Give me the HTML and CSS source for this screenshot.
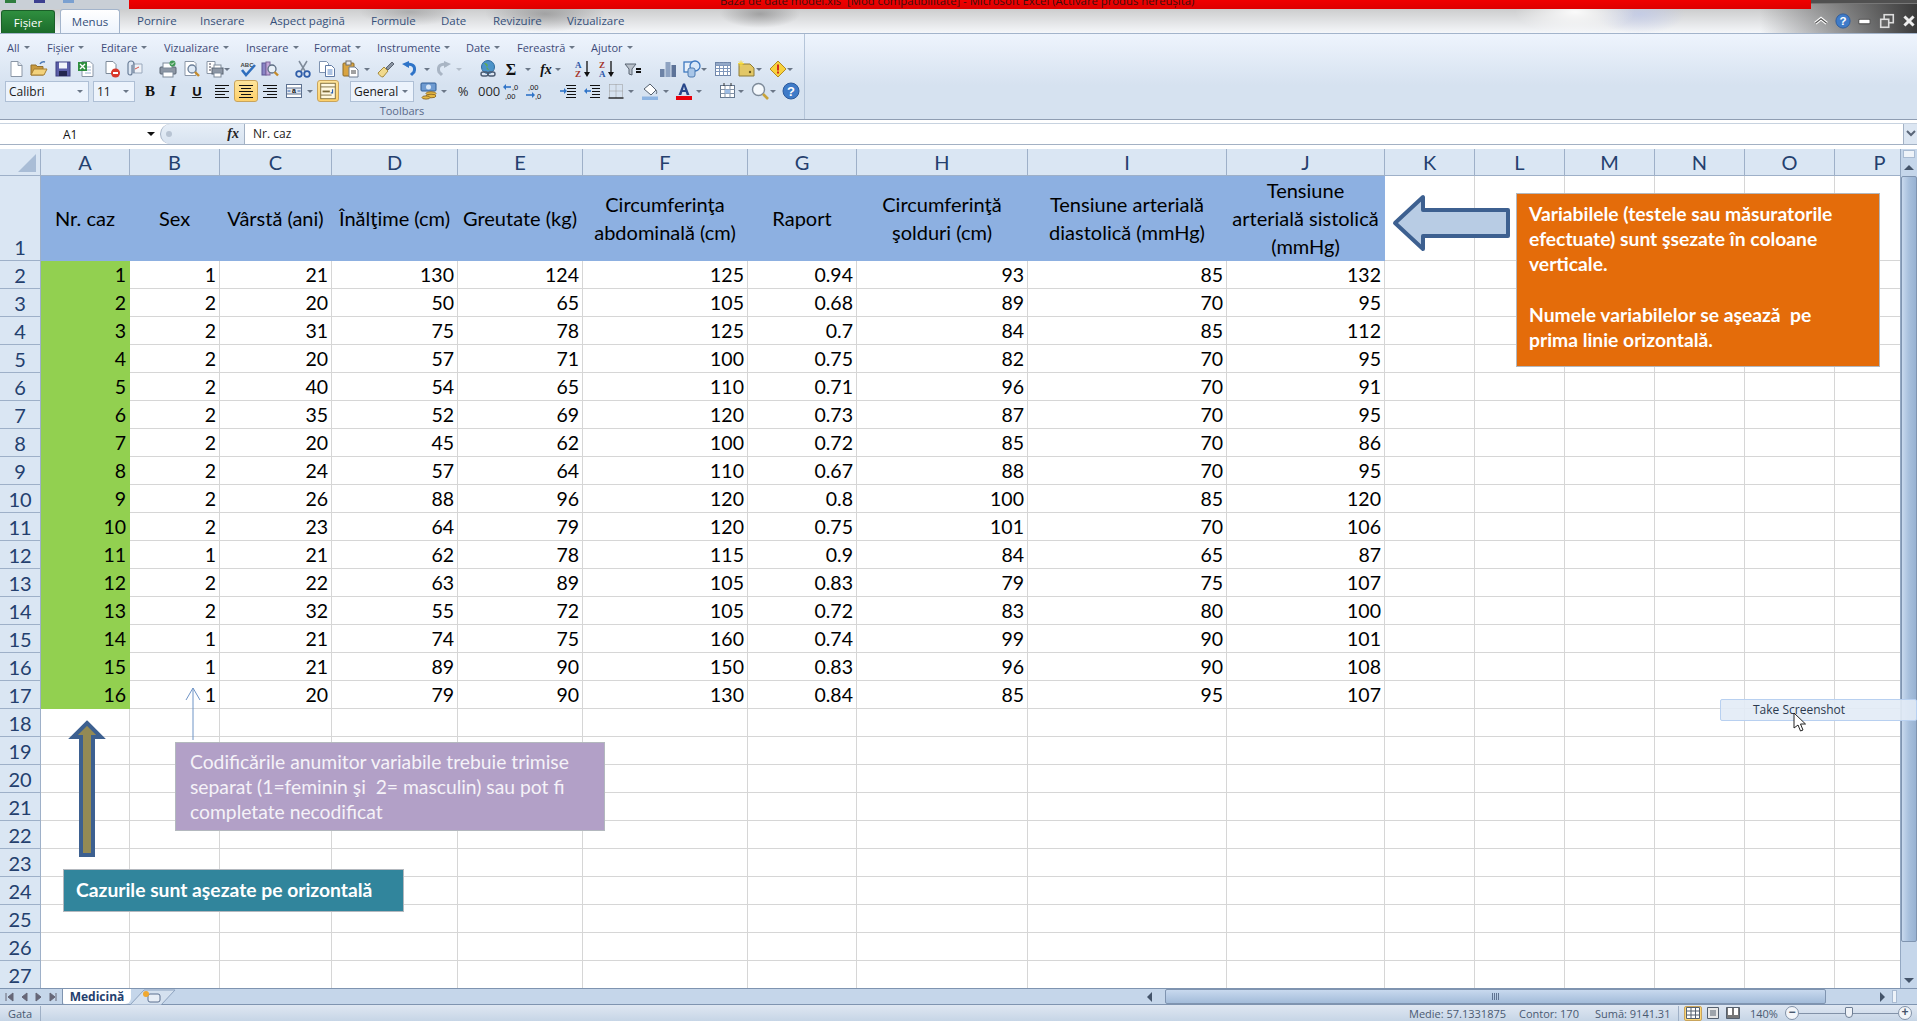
FILE: index.html
```html
<!DOCTYPE html>
<html lang="ro">
<head>
<meta charset="utf-8">
<title>Baza de date model.xls - Microsoft Excel</title>
<link rel="stylesheet" href="styles.css">
</head>
<body>

<svg class="defs" width="0" height="0">
	<symbol id="i-new" viewBox="0 0 18 18"><path d="M4 1.5h7l4 4v11H4z" fill="#fff" stroke="#8a96a6"/><path d="M11 1.5v4h4" fill="#dfe6ee" stroke="#8a96a6"/></symbol>
	<symbol id="i-open" viewBox="0 0 18 18"><path d="M1 15V5h5l1 1.500h6V15z" fill="#c99a3f" stroke="#94702c"/><path d="M1 15l3-6h13l-3 6z" fill="#f3d27c" stroke="#a57e32"/><path d="M10 4c1-2 3-2.500 5-2" fill="none" stroke="#4a78b5" stroke-width="1.500"/></symbol>
	<symbol id="i-save" viewBox="0 0 18 18"><rect x="2" y="2" width="14" height="14" fill="#5b5ea8" stroke="#3c3f80"/><rect x="5" y="2.500" width="8" height="6" fill="#f2f4fa"/><rect x="5" y="11" width="8" height="5" fill="#23264f"/></symbol>
	<symbol id="i-xls" viewBox="0 0 18 18"><path d="M5 1.500h8l3 3v12H5z" fill="#fff" stroke="#8a96a6"/><path d="M8 7h6M8 10h6M8 13h6" stroke="#9db4cf"/><rect x="1" y="2" width="9" height="9" fill="#2f8f3f"/><path d="M3 4l5 5M8 4l-5 5" stroke="#fff" stroke-width="1.400"/></symbol>
	<symbol id="i-noprint" viewBox="0 0 18 18"><path d="M3 1.500h7l3 3v9H3z" fill="#fff" stroke="#7d8a99"/><circle cx="12.500" cy="13" r="4.500" fill="#d8372a"/><rect x="10" y="12" width="5" height="2" fill="#fff"/></symbol>
	<symbol id="i-attach" viewBox="0 0 18 18"><path d="M8 4h9v9H8z" fill="#eef2f8" stroke="#9aa9bd"/><path d="M10 9l4-2" stroke="#d8544a"/><path d="M7 5v8a2 2 0 0 1-4 0V4a3 3 0 0 1 6 0v9" fill="none" stroke="#6b7f99" stroke-width="1.200"/></symbol>
	<symbol id="i-print" viewBox="0 0 18 18"><rect x="1" y="7" width="16" height="7" rx="1" fill="#8d97a5" stroke="#5a6472"/><rect x="4" y="3" width="9" height="5" fill="#fff" stroke="#7d8a99"/><rect x="4" y="12" width="10" height="5" fill="#fff" stroke="#7d8a99"/><circle cx="13.500" cy="3.500" r="3" fill="#3f9a55"/><path d="M12 3.500l1 1 2-2" stroke="#fff" fill="none"/></symbol>
	<symbol id="i-preview" viewBox="0 0 18 18"><path d="M2 1.500h9l2 2v12H2z" fill="#fff" stroke="#8a96a6"/><circle cx="9" cy="9" r="4" fill="#dfeaf6" stroke="#6b7f99" stroke-width="1.300"/><path d="M12 12l4 4" stroke="#c58b2a" stroke-width="2.400"/></symbol>
	<symbol id="i-setup" viewBox="0 0 18 18"><path d="M1 1.500h8v12H1z" fill="#fff" stroke="#8a96a6"/><path d="M3 4h2M3 7h2M3 10h2" stroke="#445"/><rect x="6" y="8" width="11" height="6" fill="#8d97a5" stroke="#5a6472"/><rect x="8" y="5" width="7" height="3" fill="#fff" stroke="#7d8a99"/><rect x="8" y="13" width="7" height="4" fill="#fff" stroke="#7d8a99"/></symbol>
	<symbol id="i-spell" viewBox="0 0 18 18"><text x="1.500" y="6.500" class="t-abc">ABC</text><path d="M3 10l4 5 9-10" fill="none" stroke="#2f6fbe" stroke-width="2.600"/></symbol>
	<symbol id="i-research" viewBox="0 0 18 18"><rect x="1" y="3" width="4" height="12" fill="#8a84c4" stroke="#5a5594"/><rect x="5" y="2" width="4" height="13" fill="#c2a8d8" stroke="#7c649c"/><circle cx="11" cy="9" r="4" fill="#e8f0f8" stroke="#5d6e84" stroke-width="1.300"/><path d="M13.500 12l3.500 3.500" stroke="#c58b2a" stroke-width="2.400"/></symbol>
	<symbol id="i-cut" viewBox="0 0 18 18"><path d="M5 1l6 10M13 1L7 11" stroke="#7f8b9a" stroke-width="1.500"/><circle cx="5" cy="14" r="2.800" fill="none" stroke="#2f5da8" stroke-width="1.800"/><circle cx="13" cy="14" r="2.800" fill="none" stroke="#2f5da8" stroke-width="1.800"/></symbol>
	<symbol id="i-copy" viewBox="0 0 18 18"><path d="M1.500 1.500h7l2 2v9h-9z" fill="#fff" stroke="#7f93b0"/><path d="M7.500 5.500h6l3 3v8h-9z" fill="#fff" stroke="#5f79a3"/><path d="M9.500 10h5M9.500 12h5M9.500 14h5" stroke="#5b87c7"/></symbol>
	<symbol id="i-paste" viewBox="0 0 18 18"><rect x="2" y="3" width="11" height="13" rx="1" fill="#d9a441" stroke="#8d6a26"/><rect x="5" y="1" width="5" height="4" fill="#e8e8e8" stroke="#6f6f6f"/><path d="M8 7h6l3 3v7H8z" fill="#fff" stroke="#6f7d90"/><path d="M10 11h5M10 13h5" stroke="#444"/></symbol>
	<symbol id="i-brush" viewBox="0 0 18 18"><path d="M1 13l6-6 4 4-5 6c-2 0-4-2-5-4z" fill="#f0d98c" stroke="#a58a3c"/><path d="M9 8l6-6 2 2-6 6z" fill="#8a94a2" stroke="#5c6674"/></symbol>
	<symbol id="i-undo" viewBox="0 0 18 18"><path d="M5 5c6-2 10 1 8 7l-3 3" fill="none" stroke="#2f74c8" stroke-width="3"/><path d="M1 4l7-3v7z" fill="#2f74c8"/></symbol>
	<symbol id="i-redo" viewBox="0 0 18 18"><path d="M13 5C7 3 3 6 5 12l3 3" fill="none" stroke="#a9b5c4" stroke-width="3"/><path d="M17 4l-7-3v7z" fill="#a9b5c4"/></symbol>
	<symbol id="i-link" viewBox="0 0 18 18"><circle cx="9" cy="7" r="6.500" fill="#4b93c9" stroke="#2f6a9c"/><path d="M5 3c3 0 5 2 3 4s2 3 3 4" fill="#5fa955"/><rect x="2" y="12" width="7" height="4" rx="2" fill="none" stroke="#4a5a70" stroke-width="1.400"/><rect x="9" y="12" width="7" height="4" rx="2" fill="none" stroke="#4a5a70" stroke-width="1.400"/></symbol>
	<symbol id="i-sigma" viewBox="0 0 18 18"><text x="9" y="15" text-anchor="middle" class="t-sig">Σ</text></symbol>
	<symbol id="i-fx" viewBox="0 0 18 18"><text x="9" y="14" text-anchor="middle" class="t-fx">fx</text></symbol>
	<symbol id="i-az" viewBox="0 0 18 18"><text x="1" y="8" class="t-sort t-blue">A</text><text x="1" y="17" class="t-sort t-red">Z</text><path d="M13 1v14" stroke="#111" stroke-width="1.300"/><path d="M10 12l3 5 3-5z" fill="#111"/></symbol>
	<symbol id="i-za" viewBox="0 0 18 18"><text x="1" y="8" class="t-sort t-red">Z</text><text x="1" y="17" class="t-sort t-blue">A</text><path d="M13 1v14" stroke="#111" stroke-width="1.300"/><path d="M10 12l3 5 3-5z" fill="#111"/></symbol>
	<symbol id="i-filter" viewBox="0 0 18 18"><path d="M1 4h11L8 9v6l-3-1V9z" fill="#b9c1cb" stroke="#596472"/><path d="M12 9h5M12 12h5" stroke="#111" stroke-width="1.800"/></symbol>
	<symbol id="i-chart" viewBox="0 0 18 18"><rect x="1" y="9" width="4.500" height="8" fill="#6d83a6"/><rect x="6.500" y="2" width="5" height="15" fill="#8ea3c2"/><rect x="12.500" y="5" width="4.500" height="12" fill="#5d7398"/></symbol>
	<symbol id="i-shapes" viewBox="0 0 18 18"><rect x="1" y="2" width="10" height="10" fill="#e8f0fa" stroke="#3d78c0" stroke-width="1.300"/><circle cx="12" cy="6" r="5" fill="#d9e8f8" stroke="#3d78c0" stroke-width="1.300"/><rect x="5" y="8" width="7" height="9" rx="2" fill="#a8c6e8" stroke="#4d7ab0"/></symbol>
	<symbol id="i-table" viewBox="0 0 18 18"><rect x="1.500" y="2.500" width="15" height="13" fill="#fff" stroke="#6f85a8"/><path d="M1.500 5.500h15M1.500 8.500h15M1.500 11.500h15M5.500 2.500v13M9.500 2.500v13M13.500 2.500v13" stroke="#7f97bb"/><rect x="2" y="3" width="14" height="2" fill="#94a9c8"/></symbol>
	<symbol id="i-note" viewBox="0 0 18 18"><path d="M2 4h11l4 4v8H2z" fill="#e2c766" stroke="#8c7a38"/><circle cx="13" cy="12" r="1.200" fill="#6a5a20"/><path d="M4 0.500v6M1 3.500h6M2 1.500l4 4M6 1.500l-4 4" stroke="#f5d93a"/></symbol>
	<symbol id="i-warn" viewBox="0 0 18 18"><path d="M9 1l8 8-8 8-8-8z" fill="#f7d23e" stroke="#b48a20"/><rect x="8" y="4.500" width="2" height="6" fill="#d32a1c"/><rect x="8" y="11.500" width="2" height="2" fill="#d32a1c"/></symbol>
	<symbol id="i-left" viewBox="0 0 18 18"><path d="M2 3.500h14M2 6.500h10M2 9.500h14M2 12.500h10M2 15.500h14" stroke="#111"/></symbol>
	<symbol id="i-center" viewBox="0 0 18 18"><path d="M2 3.500h14M4 6.500h10M2 9.500h14M4 12.500h10M2 15.500h14" stroke="#111"/></symbol>
	<symbol id="i-right" viewBox="0 0 18 18"><path d="M2 3.500h14M6 6.500h10M2 9.500h14M6 12.500h10M2 15.500h14" stroke="#111"/></symbol>
	<symbol id="i-merge" viewBox="0 0 18 18"><rect x="1.500" y="2.500" width="15" height="13" fill="#fff" stroke="#5d7190"/><rect x="1.500" y="6" width="15" height="6" fill="#e4e9f0" stroke="#5d7190"/><text x="9" y="11.300" text-anchor="middle" class="t-merge">a</text><path d="M2.500 9h3M15.500 9h-3" stroke="#2a5fb0"/></symbol>
	<symbol id="i-wrap" viewBox="0 0 22 22"><rect x="3" y="2.500" width="16" height="17" fill="#fff8e0" stroke="#7c6a3a"/><path d="M3 6.500h16M3 15.500h12" stroke="#7c6a3a"/><path d="M5 11.500h8" stroke="#7c6a3a" stroke-width="2"/><path d="M16 9v4h-2" fill="none" stroke="#2a5fb0" stroke-width="1.300"/></symbol>
	<symbol id="i-money" viewBox="0 0 18 18"><rect x="1" y="1" width="15" height="8" rx="1" fill="#6f9bd1" stroke="#2f5d96"/><circle cx="8.500" cy="5" r="2.500" fill="#d7e6f7"/><ellipse cx="11" cy="11.500" rx="5" ry="1.800" fill="#e6b83f" stroke="#94702c"/><ellipse cx="11" cy="14" rx="5" ry="1.800" fill="#e6b83f" stroke="#94702c"/><ellipse cx="6" cy="15.500" rx="4" ry="1.600" fill="#e6b83f" stroke="#94702c"/></symbol>
	<symbol id="i-incdec" viewBox="0 0 18 18"><path d="M9 5H3" stroke="#2f74c8" stroke-width="1.600"/><path d="M1 5l3-3v6z" fill="#2f74c8"/><text x="10" y="8" class="t-dec">,0</text><text x="3" y="17" class="t-dec">,00</text></symbol>
	<symbol id="i-decdec" viewBox="0 0 18 18"><text x="3" y="8" class="t-dec">,00</text><path d="M1 13h6" stroke="#2f74c8" stroke-width="1.600"/><path d="M10 13l-3-3v6z" fill="#2f74c8"/><text x="10" y="17" class="t-dec">,0</text></symbol>
	<symbol id="i-indent" viewBox="0 0 18 18"><path d="M7 3.500h10M8 6.500h9M8 9.500h9M8 12.500h9M7 15.500h10" stroke="#111"/><path d="M1 9h4" stroke="#2f74c8" stroke-width="1.600"/><path d="M8 9L5 6v6z" fill="#2f74c8"/></symbol>
	<symbol id="i-outdent" viewBox="0 0 18 18"><path d="M7 3.500h10M9 6.500h8M9 9.500h8M9 12.500h8M7 15.500h10" stroke="#111"/><path d="M4 9h4" stroke="#2f74c8" stroke-width="1.600"/><path d="M1 9l3-3v6z" fill="#2f74c8"/></symbol>
	<symbol id="i-border" viewBox="0 0 18 18"><path d="M2.500 2.500h13v13M2.500 2.500v13M9 2.500v13M2.500 9h13" fill="none" stroke="#999" stroke-dasharray="1 1"/><path d="M1.500 16h15" stroke="#111" stroke-width="1.300"/></symbol>
	<symbol id="i-fill" viewBox="0 0 18 18"><path d="M3 7l6-5 6 6-5 5z" fill="#fff" stroke="#55606e"/><path d="M15 8c1 2 1 3 0 4" fill="none" stroke="#55606e"/><rect x="1" y="14.500" width="16" height="3.500" fill="#8db4e2"/></symbol>
	<symbol id="i-color" viewBox="0 0 18 18"><path d="M3.500 13L8 1.500h2L14.500 13h-2.800l-1-3H7.300l-1 3zM8 8h2L9 4.500z" fill="#28478a"/><rect x="1" y="14" width="16" height="4" fill="#e8000b"/></symbol>
	<symbol id="i-grid" viewBox="0 0 18 18"><rect x="1.500" y="3.500" width="14" height="12" fill="#fff" stroke="#66788f"/><path d="M6 3.500v12M11 3.500v12M1.500 7.500h14M1.500 11.500h14" stroke="#8393a8"/><rect x="6" y="7.500" width="5" height="4" fill="#9dbde6"/><path d="M5 1v3M12 1v3" stroke="#333"/></symbol>
	<symbol id="i-find" viewBox="0 0 18 18"><circle cx="7.500" cy="7.500" r="6" fill="#f4f8fc" stroke="#7d8a99" stroke-width="1.400"/><path d="M12 12l5 5" stroke="#c8a33a" stroke-width="2.600"/></symbol>
	<symbol id="i-help" viewBox="0 0 18 18"><circle cx="9" cy="9" r="8" fill="#3f7bc8" stroke="#2b5a9c"/><text x="9" y="13.500" text-anchor="middle" class="t-help">?</text></symbol>
</svg>

<header class="chrome">
	<div class="titlebar">
		<div class="qat"><span class="qat-xl"></span><span class="qat-save"></span><span class="qat-undo"></span></div>
		<div class="redband"><span class="doc-title">Baza de date model.xls&nbsp; [Mod compatibilitate] - Microsoft Excel (Activare produs nereuşită)</span></div>
		<div class="winframe"></div>
	</div>
	<nav class="tabs">
		<div class="tab-file">Fişier</div>
		<div class="tab-on">Menus</div>
		<div>Pornire</div>
		<div>Inserare</div>
		<div>Aspect pagină</div>
		<div>Formule</div>
		<div>Date</div>
		<div>Revizuire</div>
		<div>Vizualizare</div>
		<div class="winbtns">
			<svg class="wb" viewBox="0 0 14 14"><path d="M2 9l5-4 5 4" fill="none" stroke="#fff" stroke-width="3"/><path d="M2 9l5-4 5 4" fill="none" stroke="#555" stroke-width="1"/></svg>
			<svg class="wb wb-help"><use href="#i-help"/></svg>
			<svg class="wb" viewBox="0 0 14 14"><rect x="1.500" y="5.500" width="10" height="4" rx="1" fill="#fff" stroke="#555"/></svg>
			<svg class="wb" viewBox="0 0 14 14"><rect x="4.500" y="1.500" width="8" height="7" fill="none" stroke="#ddd" stroke-width="1.400"/><rect x="1.500" y="5.500" width="7" height="7" fill="#666" stroke="#ddd" stroke-width="1.400"/></svg>
			<svg class="wb" viewBox="0 0 14 14"><path d="M3 3l8 8M11 3l-8 8" stroke="#eee" stroke-width="2.600"/></svg>
		</div>
	</nav>
</header>

<section class="ribbon">
	<div class="rgroup">
		<div class="menubar">
			<span>All<i class="dd"></i></span>
			<span>Fişier<i class="dd"></i></span>
			<span>Editare<i class="dd"></i></span>
			<span>Vizualizare<i class="dd"></i></span>
			<span>Inserare<i class="dd"></i></span>
			<span>Format<i class="dd"></i></span>
			<span>Instrumente<i class="dd"></i></span>
			<span>Date<i class="dd"></i></span>
			<span>Fereastră<i class="dd"></i></span>
			<span>Ajutor<i class="dd"></i></span>
		</div>
		<div class="toolbar tb1">
			<svg class="ico m7"><use href="#i-new"/></svg>
			<svg class="ico m5"><use href="#i-open"/></svg>
			<svg class="ico m6"><use href="#i-save"/></svg>
			<svg class="ico m5"><use href="#i-xls"/></svg>
			<svg class="ico m8"><use href="#i-noprint"/></svg>
			<svg class="ico m4"><use href="#i-attach"/></svg>
			<svg class="ico m16"><use href="#i-print"/></svg>
			<svg class="ico m6"><use href="#i-preview"/></svg>
			<svg class="ico m5"><use href="#i-setup"/></svg>
			<i class="dd"></i>
			<svg class="ico m9"><use href="#i-spell"/></svg>
			<svg class="ico m4"><use href="#i-research"/></svg>
			<svg class="ico m15"><use href="#i-cut"/></svg>
			<svg class="ico m6"><use href="#i-copy"/></svg>
			<svg class="ico m5"><use href="#i-paste"/></svg>
			<i class="dd m5"></i>
			<svg class="ico m7"><use href="#i-brush"/></svg>
			<svg class="ico m6"><use href="#i-undo"/></svg>
			<i class="dd m5"></i>
			<svg class="ico m4"><use href="#i-redo"/></svg>
			<i class="dd dd-off m4"></i>
			<svg class="ico m17"><use href="#i-link"/></svg>
			<svg class="ico m5"><use href="#i-sigma"/></svg>
			<i class="dd m5"></i>
			<svg class="ico m6"><use href="#i-fx"/></svg>
			<i class="dd"></i>
			<svg class="ico m13"><use href="#i-az"/></svg>
			<svg class="ico m6"><use href="#i-za"/></svg>
			<svg class="ico m8"><use href="#i-filter"/></svg>
			<svg class="ico m17"><use href="#i-chart"/></svg>
			<svg class="ico m6"><use href="#i-shapes"/></svg>
			<i class="dd"></i>
			<svg class="ico m7"><use href="#i-table"/></svg>
			<svg class="ico m5"><use href="#i-note"/></svg>
			<i class="dd m1"></i>
			<svg class="ico m7"><use href="#i-warn"/></svg>
			<i class="dd"></i>
		</div>
		<div class="toolbar tb2">
			<div class="sel sel-font m5">Calibri<i class="dd"></i></div>
			<div class="sel sel-size m4">11<i class="dd"></i></div>
			<span class="fmt fmt-b m6">B</span>
			<span class="fmt fmt-i m5">I</span>
			<span class="fmt fmt-u m6">U</span>
			<svg class="ico m7"><use href="#i-left"/></svg>
			<div class="hot hot-center m3"><svg class="ico"><use href="#i-center"/></svg></div>
			<svg class="ico m3"><use href="#i-right"/></svg>
			<svg class="ico m6"><use href="#i-merge"/></svg>
			<i class="dd m4"></i>
			<div class="hot hot-wrap m4"><svg class="ico-wide"><use href="#i-wrap"/></svg></div>
			<div class="sel sel-num m11">General<i class="dd"></i></div>
			<svg class="ico m6"><use href="#i-money"/></svg>
			<i class="dd m3"></i>
			<span class="fmt fmt-pct m7">%</span>
			<span class="fmt fmt-pct m6">000</span>
			<svg class="ico m6"><use href="#i-incdec"/></svg>
			<svg class="ico m5"><use href="#i-decdec"/></svg>
			<svg class="ico m16"><use href="#i-indent"/></svg>
			<svg class="ico m6"><use href="#i-outdent"/></svg>
			<svg class="ico m6"><use href="#i-border"/></svg>
			<i class="dd m3"></i>
			<svg class="ico m7"><use href="#i-fill"/></svg>
			<i class="dd m4"></i>
			<svg class="ico m6"><use href="#i-color"/></svg>
			<i class="dd m3"></i>
			<svg class="ico m17"><use href="#i-grid"/></svg>
			<i class="dd m1"></i>
			<svg class="ico m7"><use href="#i-find"/></svg>
			<i class="dd m1"></i>
			<svg class="ico m6"><use href="#i-help"/></svg>
		</div>
		<div class="rlabel">Toolbars</div>
	</div>
</section>

<section class="formulabar">
	<div class="namebox">A1<i class="dd dd-dark"></i></div>
	<div class="fxbox"><span class="fxdot"></span><span class="fxglyph">fx</span></div>
	<div class="fxinput">Nr. caz</div>
	<div class="fxexpand"><svg width="10" height="8" viewBox="0 0 10 8"><path d="M1 1l4 4 4-4" fill="none" stroke="#5a6678" stroke-width="2"/></svg></div>
</section>

<main class="workarea">
	<div class="sheet">
		<table class="cells">
			<colgroup>
				<col class="w41"><col class="w89"><col class="w90"><col class="w112"><col class="w126"><col class="w125"><col class="w165"><col class="w109"><col class="w171"><col class="w199"><col class="w158">
				<col class="w90"><col class="w90"><col class="w90"><col class="w90"><col class="w90"><col class="w90">
			</colgroup>
			<thead>
				<tr><th class="corner"><span class="corner-mark"></span></th><th>A</th><th>B</th><th>C</th><th>D</th><th>E</th><th>F</th><th>G</th><th>H</th><th>I</th><th>J</th><th>K</th><th>L</th><th>M</th><th>N</th><th>O</th><th>P</th></tr>
			</thead>
			<tbody>
				<tr class="head"><th class="rownum-bottom">1</th><td>Nr. caz</td><td>Sex</td><td>Vârstă (ani)</td><td>Înălţime (cm)</td><td>Greutate (kg)</td><td>Circumferinţa<br>abdominală (cm)</td><td>Raport</td><td>Circumferinţă<br>şolduri (cm)</td><td>Tensiune arterială<br>diastolică (mmHg)</td><td>Tensiune<br>arterială sistolică<br>(mmHg)</td><td class="e"></td><td class="e"></td><td class="e"></td><td class="e"></td><td class="e"></td><td class="e"></td></tr>
				<tr><th>2</th><td class="id">1</td><td>1</td><td>21</td><td>130</td><td>124</td><td>125</td><td>0.94</td><td>93</td><td>85</td><td>132</td><td></td><td></td><td></td><td></td><td></td><td></td></tr>
				<tr><th>3</th><td class="id">2</td><td>2</td><td>20</td><td>50</td><td>65</td><td>105</td><td>0.68</td><td>89</td><td>70</td><td>95</td><td></td><td></td><td></td><td></td><td></td><td></td></tr>
				<tr><th>4</th><td class="id">3</td><td>2</td><td>31</td><td>75</td><td>78</td><td>125</td><td>0.7</td><td>84</td><td>85</td><td>112</td><td></td><td></td><td></td><td></td><td></td><td></td></tr>
				<tr><th>5</th><td class="id">4</td><td>2</td><td>20</td><td>57</td><td>71</td><td>100</td><td>0.75</td><td>82</td><td>70</td><td>95</td><td></td><td></td><td></td><td></td><td></td><td></td></tr>
				<tr><th>6</th><td class="id">5</td><td>2</td><td>40</td><td>54</td><td>65</td><td>110</td><td>0.71</td><td>96</td><td>70</td><td>91</td><td></td><td></td><td></td><td></td><td></td><td></td></tr>
				<tr><th>7</th><td class="id">6</td><td>2</td><td>35</td><td>52</td><td>69</td><td>120</td><td>0.73</td><td>87</td><td>70</td><td>95</td><td></td><td></td><td></td><td></td><td></td><td></td></tr>
				<tr><th>8</th><td class="id">7</td><td>2</td><td>20</td><td>45</td><td>62</td><td>100</td><td>0.72</td><td>85</td><td>70</td><td>86</td><td></td><td></td><td></td><td></td><td></td><td></td></tr>
				<tr><th>9</th><td class="id">8</td><td>2</td><td>24</td><td>57</td><td>64</td><td>110</td><td>0.67</td><td>88</td><td>70</td><td>95</td><td></td><td></td><td></td><td></td><td></td><td></td></tr>
				<tr><th>10</th><td class="id">9</td><td>2</td><td>26</td><td>88</td><td>96</td><td>120</td><td>0.8</td><td>100</td><td>85</td><td>120</td><td></td><td></td><td></td><td></td><td></td><td></td></tr>
				<tr><th>11</th><td class="id">10</td><td>2</td><td>23</td><td>64</td><td>79</td><td>120</td><td>0.75</td><td>101</td><td>70</td><td>106</td><td></td><td></td><td></td><td></td><td></td><td></td></tr>
				<tr><th>12</th><td class="id">11</td><td>1</td><td>21</td><td>62</td><td>78</td><td>115</td><td>0.9</td><td>84</td><td>65</td><td>87</td><td></td><td></td><td></td><td></td><td></td><td></td></tr>
				<tr><th>13</th><td class="id">12</td><td>2</td><td>22</td><td>63</td><td>89</td><td>105</td><td>0.83</td><td>79</td><td>75</td><td>107</td><td></td><td></td><td></td><td></td><td></td><td></td></tr>
				<tr><th>14</th><td class="id">13</td><td>2</td><td>32</td><td>55</td><td>72</td><td>105</td><td>0.72</td><td>83</td><td>80</td><td>100</td><td></td><td></td><td></td><td></td><td></td><td></td></tr>
				<tr><th>15</th><td class="id">14</td><td>1</td><td>21</td><td>74</td><td>75</td><td>160</td><td>0.74</td><td>99</td><td>90</td><td>101</td><td></td><td></td><td></td><td></td><td></td><td></td></tr>
				<tr><th>16</th><td class="id">15</td><td>1</td><td>21</td><td>89</td><td>90</td><td>150</td><td>0.83</td><td>96</td><td>90</td><td>108</td><td></td><td></td><td></td><td></td><td></td><td></td></tr>
				<tr><th>17</th><td class="id">16</td><td>1</td><td>20</td><td>79</td><td>90</td><td>130</td><td>0.84</td><td>85</td><td>95</td><td>107</td><td></td><td></td><td></td><td></td><td></td><td></td></tr>
				<tr><th>18</th><td></td><td></td><td></td><td></td><td></td><td></td><td></td><td></td><td></td><td></td><td></td><td></td><td></td><td></td><td></td><td></td></tr>
				<tr><th>19</th><td></td><td></td><td></td><td></td><td></td><td></td><td></td><td></td><td></td><td></td><td></td><td></td><td></td><td></td><td></td><td></td></tr>
				<tr><th>20</th><td></td><td></td><td></td><td></td><td></td><td></td><td></td><td></td><td></td><td></td><td></td><td></td><td></td><td></td><td></td><td></td></tr>
				<tr><th>21</th><td></td><td></td><td></td><td></td><td></td><td></td><td></td><td></td><td></td><td></td><td></td><td></td><td></td><td></td><td></td><td></td></tr>
				<tr><th>22</th><td></td><td></td><td></td><td></td><td></td><td></td><td></td><td></td><td></td><td></td><td></td><td></td><td></td><td></td><td></td><td></td></tr>
				<tr><th>23</th><td></td><td></td><td></td><td></td><td></td><td></td><td></td><td></td><td></td><td></td><td></td><td></td><td></td><td></td><td></td><td></td></tr>
				<tr><th>24</th><td></td><td></td><td></td><td></td><td></td><td></td><td></td><td></td><td></td><td></td><td></td><td></td><td></td><td></td><td></td><td></td></tr>
				<tr><th>25</th><td></td><td></td><td></td><td></td><td></td><td></td><td></td><td></td><td></td><td></td><td></td><td></td><td></td><td></td><td></td><td></td></tr>
				<tr><th>26</th><td></td><td></td><td></td><td></td><td></td><td></td><td></td><td></td><td></td><td></td><td></td><td></td><td></td><td></td><td></td><td></td></tr>
				<tr><th>27</th><td></td><td></td><td></td><td></td><td></td><td></td><td></td><td></td><td></td><td></td><td></td><td></td><td></td><td></td><td></td><td></td></tr>
			</tbody>
		</table>

		<!-- shapes drawn over the sheet -->
		<div class="note note-orange"><b>Variabilele (testele sau măsuratorile<br>efectuate) sunt şsezate în coloane<br>verticale.<br><br>Numele variabilelor se aşează&nbsp; pe<br>prima linie orizontală.</b></div>
		<div class="note note-purple">Codificările anumitor variabile trebuie trimise<br>separat (1=feminin şi&nbsp; 2= masculin) sau pot fi<br>completate necodificat</div>
		<div class="note note-teal"><b>Cazurile sunt aşezate pe orizontală</b></div>
		<svg class="arrow arrow-left" width="124" height="60" viewBox="0 0 124 60"><path d="M5 30L33 4v13h85v26H33v13z" fill="#b8cce4" stroke="#3d6090" stroke-width="4" stroke-linejoin="round"/></svg>
		<svg class="arrow arrow-up" width="38" height="142" viewBox="0 0 38 142"><path d="M19 5L33 19h-8v118H13V19H5z" fill="#948a54" stroke="#3d6090" stroke-width="4"/></svg>
		<svg class="arrow arrow-thin" width="18" height="56" viewBox="0 0 18 56"><path d="M9 54V2M2 14L9 2l7 12" fill="none" stroke="#6f94c6"/></svg>
	</div>
	<aside class="vscroll">
		<div class="vsplit"></div>
		<div class="varrow"><i class="tri-up"></i></div>
		<div class="vthumb"></div>
		<div class="varrow varrow-end"><i class="tri-down"></i></div>
	</aside>
</main>

<section class="tabbar">
	<div class="sheetnav">
		<svg width="62" height="16" viewBox="0 0 62 16"><path d="M6 4v8M13 4L8 8l5 4zM27 4l-5 4 5 4zM36 4l5 4-5 4zM50 4l5 4-5 4zM56 4v8" fill="#667" stroke="#667"/></svg>
	</div>
	<div class="sheettab">Medicină</div>
	<svg class="newtab" width="46" height="16" viewBox="0 0 46 16"><path d="M0 16L14 1h31L31 16z" fill="#d5e1ef" stroke="#8ea3bf"/><rect x="18" y="5" width="12" height="8" rx="2" fill="#e8eef6" stroke="#5d7190"/><circle cx="16" cy="5" r="3" fill="#f0a830"/></svg>
	<div class="hscroll">
		<i class="tri-left"></i>
		<div class="hthumb"><span class="grip"></span></div>
		<i class="tri-right"></i>
		<span class="hsplit"></span>
	</div>
</section>

<footer class="statusbar">
	<span class="ready">Gata</span>
	<span class="stat stat-avg">Medie: 57.1331875</span>
	<span class="stat stat-cnt">Contor: 170</span>
	<span class="stat stat-sum">Sumă: 9141.31</span>
	<div class="viewbtns">
		<span class="view view-on"><svg width="14" height="12" viewBox="0 0 14 12"><path d="M.5.5h13v11H.5zM.5 4h13M.5 8h13M5 .5v11M9.500 .5v11" fill="#fff" stroke="#55606e"/></svg></span>
		<span class="view"><svg width="14" height="12" viewBox="0 0 14 12"><path d="M1.500.5h11v11h-11z" fill="#e8e8e8" stroke="#55606e"/><path d="M4 4h6M4 6h6M4 8h6" stroke="#55606e"/></svg></span>
		<span class="view"><svg width="14" height="12" viewBox="0 0 14 12"><path d="M.5.5h13v11H.5z" fill="#777" stroke="#55606e"/><rect x="2" y="1" width="4" height="7" fill="#fff"/><rect x="8" y="1" width="4" height="7" fill="#fff"/></svg></span>
	</div>
	<span class="zoomtxt">140%</span>
	<div class="zoomer">
		<span class="zbtn">&minus;</span>
		<span class="ztrack"><i class="zthumb"></i></span>
		<span class="zbtn">+</span>
	</div>
</footer>

<div class="tip">Take Screenshot</div>
<svg class="pointer" width="14" height="20" viewBox="0 0 14 20"><path d="M1 1v15l4-3 2.500 6 2.500-1-2.500-6h5z" fill="#fff" stroke="#222"/></svg>

</body>
</html>
```

FILE: styles.css
```css
html, body{
	margin: 0;
	padding: 0;
}
body{
	width: 1917px;
	height: 1021px;
	overflow: hidden;
	position: relative;
	display: flex;
	flex-direction: column;
	font: 12px "Open Sans", sans-serif;
	color: #3b4a63;
	background: #fff;
}
.defs{
	display: none;
}
i{
	display: block;
}

/* window title and tabs */
.chrome{
	height: 33px;
	flex: none;
	background:
		radial-gradient(ellipse 60px 22px at 1575px 12px, rgba(255,255,255,.9), transparent),
		radial-gradient(ellipse 45px 20px at 1640px 14px, rgba(190,200,235,.7), transparent),
		radial-gradient(ellipse 60px 18px at 545px 14px, rgba(120,120,120,.55), transparent),
		radial-gradient(ellipse 50px 14px at 410px 12px, rgba(120,120,120,.4), transparent),
		radial-gradient(ellipse 40px 14px at 760px 14px, rgba(110,110,110,.5), transparent),
		linear-gradient(90deg, transparent 1760px, #3a3a3a 1917px),
		linear-gradient(#bdbdbd, #f5f7fa);
}
.titlebar{
	height: 9px;
	display: flex;
	overflow: hidden;
}
.qat{
	width: 129px;
	display: flex;
	gap: 18px;
	padding-left: 5px;
	box-sizing: border-box;
	background: #c9cfd6;
}
.qat span{
	display: block;
	width: 11px;
	height: 3px;
	background: #2f7d3e;
}
.qat .qat-save{
	background: #3c3f90;
}
.qat .qat-undo{
	background: #7aa0d0;
}
.redband{
	width: 1682px;
	background: linear-gradient(#f00000, #dd0000);
	position: relative;
}
.doc-title{
	display: block;
	margin-left: 591px;
	margin-top: -7px;
	font-size: 11.300px;
	line-height: 16px;
	color: #3a1010;
	white-space: nowrap;
}
.winframe{
	flex: 1;
	background: #505050;
	border-bottom: 1px solid #777;
	height: 3px;
}
.tabs{
	height: 24px;
	display: grid;
	grid-template-columns: 59px 77px 63px 70px 101px 70px 52px 74px 100px 1fr;
	padding-left: 1px;
	align-items: center;
	line-height: 24px;
	font-size: 11.5px;
	color: #35507a;
	box-sizing: border-box;
}
.tab-file{
	width: 54px;
	height: 23px;
	align-self: end;
	text-align: center;
	color: #fff;
	background: linear-gradient(#2f8f3f, #1b6b2a);
	border-radius: 3px 3px 0 0;
	border: 1px solid #1a5e28;
	border-bottom: 0;
	box-sizing: border-box;
}
.tab-on{
	width: 60px;
	height: 24px;
	text-align: center;
	color: #35507a;
	background: linear-gradient(#fff, #edf3fc);
	border: 1px solid #a3b4cb;
	border-bottom: 0;
	border-radius: 3px 3px 0 0;
	box-sizing: border-box;
}
.winbtns{
	display: flex;
	justify-content: flex-end;
	gap: 6px;
	padding-right: 0;
	align-items: center;
}
.wb{
	width: 16px;
	height: 16px;
}

/* ribbon */
.ribbon{
	height: 87px;
	flex: none;
	display: flex;
	box-sizing: border-box;
	background: linear-gradient(#eef4fd, #d6e2f0 60%);
	border-top: 1px solid #a3b4cb;
	border-bottom: 1px solid #8f9db2;
}
.rgroup{
	width: 805px;
	box-sizing: border-box;
	border-right: 1px solid #b5c5d9;
	padding-top: 4px;
}
.menubar{
	height: 18px;
	display: grid;
	grid-template-columns: 40px 54px 63px 82px 68px 63px 89px 51px 74px auto;
	padding-left: 7px;
	align-items: center;
	font-size: 11px;
	color: #3d4a78;
}
.menubar span{
	display: flex;
	align-items: center;
	gap: 4px;
}
.dd{
	flex: none;
	width: 0;
	height: 0;
	border-left: 3px solid transparent;
	border-right: 3px solid transparent;
	border-top: 3px solid #6b7787;
}
.dd-off{
	border-top-color: #b3bdca;
}
.dd-dark{
	border-top-color: #111;
	border-left-width: 4px;
	border-right-width: 4px;
	border-top-width: 4px;
}
.toolbar{
	display: flex;
	align-items: center;
}
.tb1{
	height: 18px;
	margin-top: 4px;
}
.tb2{
	height: 22px;
	margin-top: 2px;
}
.ico{
	flex: none;
	width: 18px;
	height: 18px;
}
.ico-wide{
	display: block;
	width: 22px;
	height: 22px;
}
.m1{ margin-left: 1px; }
.m3{ margin-left: 3px; }
.m4{ margin-left: 4px; }
.m5{ margin-left: 5px; }
.m6{ margin-left: 6px; }
.m7{ margin-left: 7px; }
.m8{ margin-left: 8px; }
.m9{ margin-left: 9px; }
.m11{ margin-left: 11px; }
.m13{ margin-left: 13px; }
.m15{ margin-left: 15px; }
.m16{ margin-left: 16px; }
.m17{ margin-left: 17px; }
.sel{
	height: 21px;
	box-sizing: border-box;
	display: flex;
	align-items: center;
	justify-content: space-between;
	padding: 0 5px 0 3px;
	background: #ecf3fc;
	border: 1px solid #aebfd5;
	font-size: 12px;
	color: #1a1a1a;
}
.sel-font{ width: 84px; }
.sel-size{ width: 42px; }
.sel-num{ width: 64px; }
.fmt{
	flex: none;
	width: 18px;
	text-align: center;
	color: #111;
}
.fmt-b{
	font: bold 15px "Liberation Serif", serif;
}
.fmt-i{
	font: italic bold 15px "Liberation Serif", serif;
}
.fmt-u{
	font: bold 13px "Open Sans", sans-serif;
	text-decoration: underline;
}
.fmt-pct{
	font-size: 13px;
	color: #2a2a2a;
}
.hot{
	flex: none;
	height: 22px;
	box-sizing: border-box;
	display: flex;
	align-items: center;
	justify-content: center;
	background: linear-gradient(#fee49a, #fdd06a);
	border: 1px solid #c9a45c;
	border-radius: 3px;
}
.hot-center{ width: 24px; }
.hot-wrap{ width: 22px; }
.rlabel{
	margin-top: 1px;
	text-align: center;
	font-size: 11px;
	line-height: 15px;
	color: #5a6a8a;
}
.t-abc{ font: bold 6px "Liberation Sans", sans-serif; fill: #444; }
.t-sig{ font: bold 16px "Liberation Serif", serif; fill: #111; }
.t-fx{ font: italic bold 14px "Liberation Serif", serif; fill: #111; }
.t-sort{ font: bold 9px "Liberation Serif", serif; }
.t-blue{ fill: #2b57a8; }
.t-red{ fill: #a5342a; }
.t-merge{ font: bold 7px "Liberation Sans", sans-serif; fill: #111; }
.t-dec{ font: 7.500px "Liberation Sans", sans-serif; fill: #111; }
.t-help{ font: bold 13px "Liberation Sans", sans-serif; fill: #fff; }

/* formula bar */
.formulabar{
	margin-top: 3px;
	height: 22px;
	flex: none;
	display: flex;
	box-sizing: border-box;
	background: #fff;
	border-top: 1px solid #c8d3e0;
	border-bottom: 1px solid #a3b1c4;
	font-size: 12px;
	color: #222;
}
.namebox{
	width: 160px;
	flex: none;
	display: flex;
	align-items: center;
	justify-content: space-between;
	box-sizing: border-box;
	padding: 0 5px 0 63px;
	color: #111;
}
.fxbox{
	width: 85px;
	flex: none;
	box-sizing: border-box;
	background: linear-gradient(#e6eef7, #d8e3f0);
	border-radius: 11px 0 0 11px;
	border-left: 1px solid #a3b1c4;
	border-right: 1px solid #a3b1c4;
	display: flex;
	align-items: center;
	justify-content: space-between;
	padding: 0 5px;
}
.fxdot{
	width: 6px;
	height: 6px;
	border-radius: 3px;
	background: #b8c4d3;
}
.fxglyph{
	font: italic bold 14px "Liberation Serif", serif;
	color: #222;
}
.fxinput{
	flex: 1;
	padding-left: 8px;
	line-height: 20px;
}
.fxexpand{
	width: 13px;
	background: #dce6f2;
	border-left: 1px solid #a3b1c4;
	display: flex;
	align-items: center;
	justify-content: center;
}

/* sheet */
.workarea{
	margin-top: 4px;
	height: 839px;
	flex: none;
	display: flex;
	background: #fff;
}
.sheet{
	width: 1900px;
	flex: none;
	position: relative;
	overflow: hidden;
}
.cells{
	table-layout: fixed;
	width: 1925px;
	border-collapse: separate;
	border-spacing: 0;
	font: 19.500px Lato, sans-serif;
	color: #000;
}
.w41{ width: 41px; }
.w89{ width: 89px; }
.w90{ width: 90px; }
.w109{ width: 109px; }
.w112{ width: 112px; }
.w125{ width: 125px; }
.w126{ width: 126px; }
.w158{ width: 158px; }
.w165{ width: 165px; }
.w171{ width: 171px; }
.w199{ width: 199px; }
.cells th{
	padding: 0;
	font-weight: normal;
	font-size: 20px;
	color: #24406e;
	background: #dae6f3;
	box-sizing: border-box;
	border-right: 1px solid #9eb0c8;
	border-bottom: 1px solid #9eb0c8;
	text-align: center;
	height: 28px;
}
.cells td{
	box-sizing: border-box;
	height: 28px;
	padding: 0 3px 0 0;
	text-align: right;
	white-space: nowrap;
	border-right: 1px solid #d6d6d6;
	border-bottom: 1px solid #d6d6d6;
}
.cells td.id{
	background: #92d050;
	border-color: #92d050;
}
.cells thead th{
	height: 27px;
	border-top: 0;
}
.corner{
	position: relative;
}
.corner-mark{
	position: absolute;
	right: 4px;
	bottom: 3px;
	width: 0;
	height: 0;
	border-left: 18px solid transparent;
	border-bottom: 18px solid #a9bdd6;
}
.head th, .head td{
	height: 85px;
}
.head td{
	padding: 0;
	font-size: 20px;
	line-height: 28px;
	text-align: center;
	background: #8db0e1;
	border-color: #8db0e1;
}
.head td.e{
	background: #fff;
	border-color: #d6d6d6;
}
.cells .rownum-bottom{
	vertical-align: bottom;
	line-height: 26px;
}

/* callouts over the sheet */
.note{
	position: absolute;
	box-sizing: border-box;
	border: 1px solid #b3b8be;
	color: #fff;
	font: 19.300px/25.200px Lato, sans-serif;
}
.note-orange{
	left: 1516px;
	top: 44px;
	width: 364px;
	height: 174px;
	padding: 7px 0 0 12px;
	background: #e46c0a;
}
.note-purple{
	left: 175px;
	top: 593px;
	width: 430px;
	height: 89px;
	padding: 6px 0 0 14px;
	background: #b2a0c7;
	color: #f5f2f8;
}
.note-teal{
	left: 63px;
	top: 720px;
	width: 341px;
	height: 43px;
	padding: 7px 0 0 12px;
	background: #31859c;
}
.arrow{
	position: absolute;
}
.arrow-left{
	left: 1390px;
	top: 44px;
}
.arrow-up{
	left: 68px;
	top: 569px;
}
.arrow-thin{
	left: 184px;
	top: 537px;
}

/* vertical scrollbar */
.vscroll{
	flex: 1;
	display: flex;
	flex-direction: column;
	align-items: stretch;
	background: #c5d6ea;
	border-left: 1px solid #94a8c2;
	box-sizing: border-box;
}
.vsplit{
	height: 6px;
	margin: 1px 2px;
	background: #eef3f9;
	border: 1px solid #a9bbd2;
}
.varrow{
	height: 16px;
	display: flex;
	align-items: center;
	justify-content: center;
}
.varrow-end{
	margin-top: 30px;
}
.vthumb{
	height: 766px;
	margin-top: 1px;
	background: linear-gradient(90deg, #c8d9ee, #a7bfdc 50%, #98b2d2);
	border: 1px solid #7f94b0;
	border-radius: 2px;
	box-sizing: border-box;
}
.tri-up, .tri-down{
	width: 0;
	height: 0;
	border-left: 5px solid transparent;
	border-right: 5px solid transparent;
}
.tri-up{
	border-bottom: 5px solid #44546a;
}
.tri-down{
	border-top: 5px solid #44546a;
}

/* sheet tabs and horizontal scrollbar */
.tabbar{
	height: 17px;
	flex: none;
	display: flex;
	box-sizing: border-box;
	background: #c5d6ea;
	border-top: 1px solid #7f94b0;
	border-bottom: 1px solid #7f94b0;
}
.sheetnav{
	width: 63px;
	flex: none;
	box-sizing: border-box;
	border-right: 1px solid #7f94b0;
}
.sheettab{
	width: 68px;
	flex: none;
	height: 15px;
	box-sizing: border-box;
	text-align: center;
	font-weight: bold;
	font-size: 12px;
	line-height: 15px;
	color: #24406e;
	background: #fff;
	border-radius: 0 0 6px 2px;
}
.newtab{
	flex: none;
	margin-left: -1px;
}
.hscroll{
	width: 756px;
	margin-left: 968px;
	flex: none;
	display: flex;
	align-items: center;
	box-sizing: border-box;
}
.tri-left, .tri-right{
	flex: none;
	width: 0;
	height: 0;
	border-top: 5px solid transparent;
	border-bottom: 5px solid transparent;
}
.tri-left{
	margin-left: 3px;
	border-right: 5px solid #44546a;
}
.tri-right{
	margin-left: 54px;
	border-left: 5px solid #44546a;
}
.hthumb{
	flex: none;
	margin-left: 13px;
	width: 661px;
	height: 15px;
	box-sizing: border-box;
	display: flex;
	align-items: center;
	justify-content: center;
	background: linear-gradient(#c8d9ee, #a3bcda);
	border: 1px solid #7f94b0;
	border-radius: 2px;
}
.grip{
	width: 7px;
	height: 7px;
	background: repeating-linear-gradient(90deg, #5f7391 0, #5f7391 1px, transparent 1px, transparent 2px);
}
.hsplit{
	flex: none;
	margin-left: 7px;
	width: 5px;
	height: 13px;
	box-sizing: border-box;
	background: #eef3f9;
	border: 1px solid #a9bbd2;
}

/* status bar */
.statusbar{
	flex: 1;
	position: relative;
	display: flex;
	align-items: center;
	background: linear-gradient(#dfe7f2, #c6d5e6);
	font-size: 11px;
	color: #4a5a72;
}
.ready{
	width: 41px;
	flex: none;
	box-sizing: border-box;
	padding-left: 8px;
	border-right: 1px solid #9fb0c6;
}
.stat{
	flex: none;
	white-space: nowrap;
}
.stat-avg{ margin-left: 1368px; width: 110px; }
.stat-cnt{ width: 76px; }
.stat-sum{ width: 83px; border-right: 1px solid #9fb0c6; }
.viewbtns{
	display: flex;
	align-items: center;
	margin-left: 5px;
	gap: 2px;
}
.view{
	width: 18px;
	height: 15px;
	display: flex;
	align-items: center;
	justify-content: center;
}
.view-on{
	box-sizing: border-box;
	background: #fdd777;
	border: 1px solid #c9a45c;
	border-radius: 2px;
}
.zoomtxt{
	margin-left: 8px;
	width: 33px;
}
.zoomer{
	display: flex;
	align-items: center;
	margin-left: 2px;
}
.zbtn{
	width: 14px;
	height: 14px;
	box-sizing: border-box;
	border: 1px solid #8292a8;
	border-radius: 7px;
	background: #f2f5f9;
	text-align: center;
	font: bold 12px/11px "Liberation Sans", sans-serif;
	color: #45546a;
}
.ztrack{
	width: 99px;
	height: 1px;
	background: #8292a8;
	position: relative;
}
.zthumb{
	position: absolute;
	left: 46px;
	top: -6px;
	width: 8px;
	height: 11px;
	box-sizing: border-box;
	background: #eef2f7;
	border: 1px solid #6e7e94;
	border-radius: 1px 1px 4px 4px;
}

/* tooltip left by the screenshot tool */
.tip{
	position: absolute;
	left: 1720px;
	top: 699px;
	width: 197px;
	height: 22px;
	box-sizing: border-box;
	padding-left: 32px;
	line-height: 20px;
	font-size: 12px;
	color: #2c3a4f;
	background: rgba(226,235,246,.9);
	border: 1px solid #b8d0f0;
	border-radius: 2px;
}
.pointer{
	position: absolute;
	left: 1793px;
	top: 712px;
}
```
